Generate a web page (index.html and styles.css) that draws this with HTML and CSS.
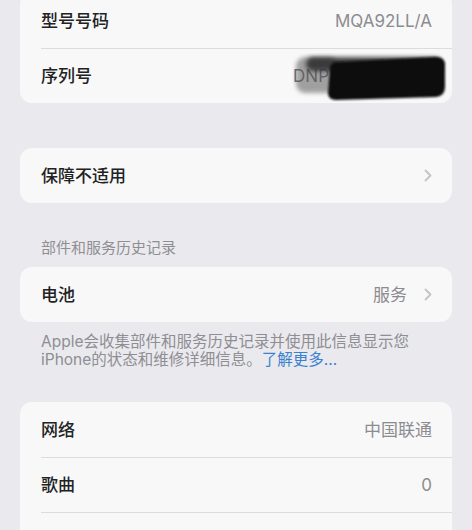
FILE: index.html
```html
<!DOCTYPE html>
<html lang="zh-CN">
<head>
<meta charset="utf-8">
<title>关于本机</title>
<link rel="stylesheet" href="styles.css">
</head>
<body>
<main class="page">
  <section class="card card-first">
    <div class="row">
      <div class="row-body">
        <span class="label">型号号码</span>
        <span class="value">MQA92LL/A</span>
      </div>
    </div>
    <div class="row">
      <div class="row-body">
        <span class="label">序列号</span>
        <span class="value serial">DNP<span class="serial-rest"></span>
          <svg class="scribble" width="160" height="54" viewBox="0 0 160 54" aria-hidden="true">
            <defs>
              <filter id="b1" x="-20%" y="-40%" width="140%" height="180%"><feGaussianBlur stdDeviation="2.2"/></filter>
              <filter id="b2" x="-20%" y="-40%" width="140%" height="180%"><feGaussianBlur stdDeviation="1.3"/></filter>
            </defs>
            <rect x="4" y="4" width="42" height="36" rx="9" fill="#5a5a5a" opacity="0.55" filter="url(#b1)"/>
            <rect x="14" y="4" width="136" height="14" rx="7" fill="#2a2a2a" opacity="0.85" filter="url(#b1)"/>
            <path d="M44 9 Q40 9 38 14 L36 40 Q36 47 44 47 L144 44 Q153 43 153 34 L153 12 Q153 4 144 4 Z" fill="#111" filter="url(#b2)"/>
          </svg>
        </span>
      </div>
    </div>
  </section>

  <section class="card card-gap">
    <div class="row">
      <div class="row-body">
        <span class="label">保障不适用</span>
        <svg class="chevron" width="8" height="13" viewBox="0 0 8 13" aria-hidden="true"><polyline points="1.5,1.5 6.5,6.5 1.5,11.5" fill="none" stroke="#c3c3c7" stroke-width="1.8" stroke-linecap="round" stroke-linejoin="round"/></svg>
      </div>
    </div>
  </section>

  <h2 class="section-header">部件和服务历史记录</h2>
  <section class="card">
    <div class="row">
      <div class="row-body">
        <span class="label">电池</span>
        <span class="value value-link">服务</span>
        <svg class="chevron" width="8" height="13" viewBox="0 0 8 13" aria-hidden="true"><polyline points="1.5,1.5 6.5,6.5 1.5,11.5" fill="none" stroke="#c3c3c7" stroke-width="1.8" stroke-linecap="round" stroke-linejoin="round"/></svg>
      </div>
    </div>
  </section>
  <p class="footer">Apple会收集部件和服务历史记录并使用此信息显示您<br>iPhone的状态和维修详细信息。<a class="link" href="#">了解更多...</a></p>

  <section class="card card-last">
    <div class="row">
      <div class="row-body">
        <span class="label">网络</span>
        <span class="value">中国联通</span>
      </div>
    </div>
    <div class="row">
      <div class="row-body">
        <span class="label">歌曲</span>
        <span class="value">0</span>
      </div>
    </div>
    <div class="row">
      <div class="row-body">
        <span class="label">视频</span>
        <span class="value">0</span>
      </div>
    </div>
  </section>
</main>
</body>
</html>
```
FILE: styles.css
```css
html, body {
  margin: 0;
  padding: 0;
  background: #eae9ee;
}
body {
  font-family: Inter, "Noto Sans CJK SC", "Noto Sans", sans-serif;
  color: #222224;
  overflow: hidden;
  height: 530px;
}
.page {
  display: flex;
  flex-direction: column;
}
.card {
  background: #f8f8f8;
  border-radius: 12px;
  margin: 0 20px;
}
.card-first {
  margin-top: -7px;
}
.card-gap {
  margin-top: 45px;
}
.card-last {
  margin-top: 33px;
}
.row {
  padding-left: 21px;
}
.row-body {
  display: flex;
  align-items: center;
  height: 55px;
  box-sizing: border-box;
  padding-right: 20px;
  border-top: 1px solid #dcdce0;
}
.row:first-child .row-body {
  border-top: none;
}
.label {
  font-size: 17px;
  font-weight: 500;
  flex: 1;
  line-height: 22px;
}
.value {
  font-size: 17px;
  color: #8c8c90;
  line-height: 22px;
}
.value-link {
  margin-right: 17px;
}
.chevron {
  display: block;
  flex-shrink: 0;
}
.serial {
  position: relative;
  display: inline-flex;
  align-items: center;
  color: #6e6e72;
}
.serial-rest {
  display: inline-block;
  width: 103px;
}
.scribble {
  position: absolute;
  left: -1px;
  top: -12px;
}
.section-header {
  margin: 35px 20px 9px;
  padding-left: 21px;
  font-size: 15px;
  font-weight: 400;
  line-height: 20px;
  color: #8e8e93;
}
.footer {
  margin: 11px 20px 0;
  padding-left: 21px;
  font-size: 15.5px;
  line-height: 18px;
  color: #8e8e93;
}
.link {
  color: #3a82d0;
  text-decoration: none;
}
```
